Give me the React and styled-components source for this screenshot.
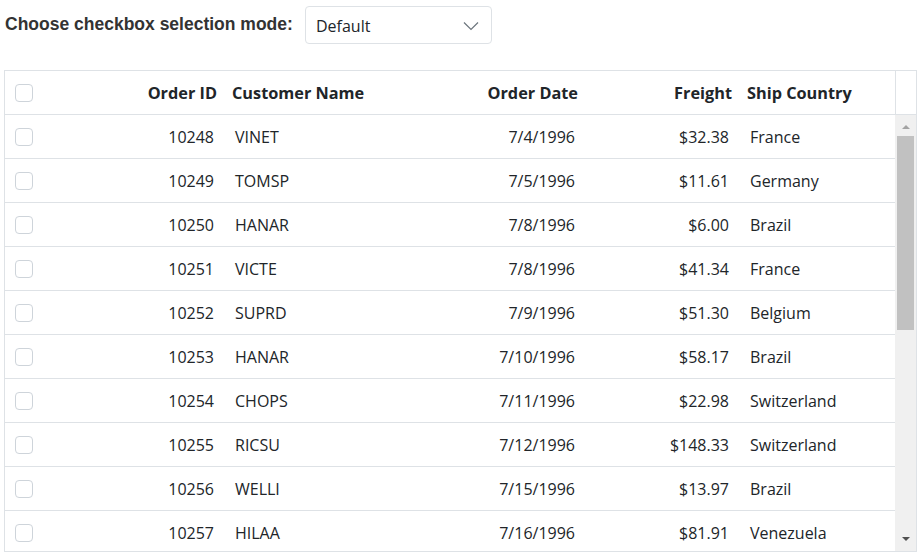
import React from "react";
import styled, { createGlobalStyle } from "styled-components";

const GlobalStyle = createGlobalStyle`
  body {
    margin: 0;
    background: #fff;
    font-family: "Open Sans", "Noto Sans", sans-serif;
    color: #212529;
  }
`;

const orders = [
  { id: 10248, customer: "VINET", date: "7/4/1996", freight: "$32.38", country: "France" },
  { id: 10249, customer: "TOMSP", date: "7/5/1996", freight: "$11.61", country: "Germany" },
  { id: 10250, customer: "HANAR", date: "7/8/1996", freight: "$6.00", country: "Brazil" },
  { id: 10251, customer: "VICTE", date: "7/8/1996", freight: "$41.34", country: "France" },
  { id: 10252, customer: "SUPRD", date: "7/9/1996", freight: "$51.30", country: "Belgium" },
  { id: 10253, customer: "HANAR", date: "7/10/1996", freight: "$58.17", country: "Brazil" },
  { id: 10254, customer: "CHOPS", date: "7/11/1996", freight: "$22.98", country: "Switzerland" },
  { id: 10255, customer: "RICSU", date: "7/12/1996", freight: "$148.33", country: "Switzerland" },
  { id: 10256, customer: "WELLI", date: "7/15/1996", freight: "$13.97", country: "Brazil" },
  { id: 10257, customer: "HILAA", date: "7/16/1996", freight: "$81.91", country: "Venezuela" },
];

const columns = "45px 174px 176px 185px 154px 156px";

const Page = styled.div`
  padding: 6px 0 0 4px;
`;

const Toolbar = styled.div`
  display: flex;
  align-items: center;
  height: 38px;
`;

const Label = styled.label`
  font-family: "Liberation Sans", Arial, sans-serif;
  font-weight: bold;
  font-size: 17.5px;
  color: #333;
  margin-left: 1px;
  width: 300px;
  padding-bottom: 2px;
`;

const Select = styled.div`
  box-sizing: border-box;
  width: 187px;
  height: 38px;
  border: 1px solid #dee2e6;
  border-radius: 4px;
  display: flex;
  align-items: center;
  justify-content: space-between;
  padding: 2px 12px 0 10px;
  font-size: 16px;
  color: #212529;
`;

const Grid = styled.div`
  box-sizing: border-box;
  margin-top: 26px;
  width: 913px;
  border: 1px solid #dee2e6;
`;

const HeaderRow = styled.div`
  display: flex;
  height: 43px;
  border-bottom: 1px solid #dee2e6;
`;

const Cols = styled.div`
  display: grid;
  grid-template-columns: ${columns};
  width: 890px;
  flex-shrink: 0;
  height: 100%;
`;

const HeaderFiller = styled.div`
  flex: 1;
  border-left: 1px solid #dee2e6;
`;

const HeadCell = styled.div`
  display: flex;
  align-items: center;
  justify-content: ${(p) => (p.$right ? "flex-end" : "flex-start")};
  padding: 0 7px 0 8px;
  font-weight: 700;
  font-size: 16.3px;
  white-space: nowrap;
  overflow: hidden;
`;

const Body = styled.div`
  display: flex;
  height: 436px;
  overflow: hidden;
`;

const Rows = styled.div`
  width: 890px;
  flex-shrink: 0;
`;

const Row = styled.div`
  display: grid;
  grid-template-columns: ${columns};
  height: 43px;
  border-bottom: 1px solid #dee2e6;
`;

const Cell = styled.div`
  display: flex;
  align-items: center;
  justify-content: ${(p) => (p.$right ? "flex-end" : "flex-start")};
  padding: 0 10px 0 11px;
  font-size: 16px;
  white-space: nowrap;
`;

const CheckCell = styled.div`
  display: flex;
  align-items: center;
  padding-left: 10px;
`;

const Check = styled.span`
  box-sizing: border-box;
  width: 18px;
  height: 18px;
  border: 1px solid #ced4da;
  border-radius: 4px;
  background: #fff;
`;

const Scrollbar = styled.div`
  flex: 1;
  background: #f0f0f0;
  display: flex;
  flex-direction: column;
  align-items: center;
`;

const Arrow = styled.div`
  width: 0;
  height: 0;
  border-left: 4.5px solid transparent;
  border-right: 4.5px solid transparent;
  ${(p) =>
    p.$down
      ? "border-top: 4px solid #505050; margin-top: auto; margin-bottom: 10px;"
      : "border-bottom: 4px solid #a3a3a3; margin-top: 10px;"}
`;

const Thumb = styled.div`
  width: 17px;
  height: 194px;
  margin-top: 7px;
  background: #c1c1c1;
`;

function Chevron() {
  return (
    <svg width="16" height="10" viewBox="0 0 16 10">
      <path d="M1 1.5 L8 8.5 L15 1.5" fill="none" stroke="#6c757d" strokeWidth="1.2" />
    </svg>
  );
}

export default function App() {
  return (
    <Page>
      <GlobalStyle />
      <Toolbar>
        <Label>Choose checkbox selection mode:</Label>
        <Select>
          <span>Default</span>
          <Chevron />
        </Select>
      </Toolbar>
      <Grid>
        <HeaderRow>
          <Cols>
            <CheckCell>
              <Check />
            </CheckCell>
            <HeadCell $right>Order ID</HeadCell>
            <HeadCell>Customer Name</HeadCell>
            <HeadCell $right>Order Date</HeadCell>
            <HeadCell $right>Freight</HeadCell>
            <HeadCell>Ship Country</HeadCell>
          </Cols>
          <HeaderFiller />
        </HeaderRow>
        <Body>
          <Rows>
            {orders.map((o) => (
              <Row key={o.id}>
                <CheckCell>
                  <Check />
                </CheckCell>
                <Cell $right>{o.id}</Cell>
                <Cell>{o.customer}</Cell>
                <Cell $right>{o.date}</Cell>
                <Cell $right>{o.freight}</Cell>
                <Cell>{o.country}</Cell>
              </Row>
            ))}
          </Rows>
          <Scrollbar>
            <Arrow />
            <Thumb />
            <Arrow $down />
          </Scrollbar>
        </Body>
      </Grid>
    </Page>
  );
}
